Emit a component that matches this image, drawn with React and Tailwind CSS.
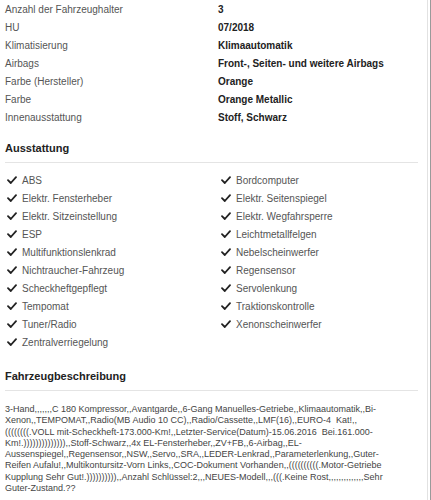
import React from "react";

const details = [
  ["Anzahl der Fahrzeughalter", "3"],
  ["HU", "07/2018"],
  ["Klimatisierung", "Klimaautomatik"],
  ["Airbags", "Front-, Seiten- und weitere Airbags"],
  ["Farbe (Hersteller)", "Orange"],
  ["Farbe", "Orange Metallic"],
  ["Innenausstattung", "Stoff, Schwarz"],
];

const features = [
  ["ABS", "Bordcomputer"],
  ["Elektr. Fensterheber", "Elektr. Seitenspiegel"],
  ["Elektr. Sitzeinstellung", "Elektr. Wegfahrsperre"],
  ["ESP", "Leichtmetallfelgen"],
  ["Multifunktionslenkrad", "Nebelscheinwerfer"],
  ["Nichtraucher-Fahrzeug", "Regensensor"],
  ["Scheckheftgepflegt", "Servolenkung"],
  ["Tempomat", "Traktionskontrolle"],
  ["Tuner/Radio", "Xenonscheinwerfer"],
  ["Zentralverriegelung", null],
];

const description = [
  "3-Hand,,,,,,,C 180 Kompressor,,Avantgarde,,6-Gang Manuelles-Getriebe,,Klimaautomatik,,Bi-",
  "Xenon,,TEMPOMAT,,Radio(MB Audio 10 CC),,Radio/Cassette,,LMF(16),,EURO-4  Kat!,,",
  "((((((((.VOLL mit-Scheckheft-173.000-Km!,,Letzter-Service(Datum)-15.06.2016  Bei.161.000-",
  "Km!.)))))))))))))),,Stoff-Schwarz,,4x EL-Fensterheber,,ZV+FB,,6-Airbag,,EL-",
  "Aussenspiegel,,Regensensor,,NSW,,Servo,,SRA,,LEDER-Lenkrad,,Parameterlenkung,,Guter-",
  "Reifen Aufalu!,,Multikontursitz-Vorn Links,,COC-Dokument Vorhanden,,((((((((((.Motor-Getriebe",
  "Kupplung Sehr Gut!.)))))))))),,Anzahl Schlüssel:2,,,NEUES-Modell,,,(((.Keine Rost,,,,,,,,,,,,,,Sehr",
  "Guter-Zustand.??",
];

function CheckIcon() {
  return (
    <svg width="10" height="8" viewBox="0 0 10 8" className="shrink-0">
      <path d="M1 4.2 L3.8 7 L9 1.2" fill="none" stroke="#222" strokeWidth="1.8" strokeLinecap="round" strokeLinejoin="round" />
    </svg>
  );
}

function Feature({ label }) {
  return (
    <div className="flex items-center gap-[5px] h-[18px]">
      <CheckIcon />
      <span>{label}</span>
    </div>
  );
}

export default function App() {
  return (
    <div className="w-[431px] h-[500px] overflow-hidden bg-white border-r border-[#9a9a9a]">
      <div
        className="w-[428px] h-full border-r border-[#e2e2e2] pl-[5px] pr-[7px] text-[10px] text-[#555]"
        style={{ fontFamily: '"Liberation Sans", Arial, sans-serif' }}
      >
        <div>
          {details.map(([label, value]) => (
            <div key={label} className="grid grid-cols-[213px_1fr] h-[18px] items-center">
              <span>{label}</span>
              <span className="font-bold text-[#222]">{value}</span>
            </div>
          ))}
        </div>

        <h2 className="mt-[15px] text-[11px] font-bold text-[#222] leading-[14px]">Ausstattung</h2>
        <div className="mt-[7px] mr-[2px] border-t border-[#e4e4e4]" />

        <div className="mt-[8px] grid grid-cols-[214px_1fr] pl-[2px]">
          {features.map(([left, right]) => (
            <React.Fragment key={left}>
              <Feature label={left} />
              {right ? <Feature label={right} /> : <div />}
            </React.Fragment>
          ))}
        </div>

        <h2 className="mt-[18px] text-[11px] font-bold text-[#222] leading-[14px]">Fahrzeugbeschreibung</h2>
        <div className="mt-[7px] mr-[2px] border-t border-[#e4e4e4]" />

        <div className="mt-[13px] text-[9px] leading-[11.3px] text-[#444]">
          {description.map((line) => (
            <div key={line} className="whitespace-pre">{line}</div>
          ))}
        </div>
      </div>
    </div>
  );
}
